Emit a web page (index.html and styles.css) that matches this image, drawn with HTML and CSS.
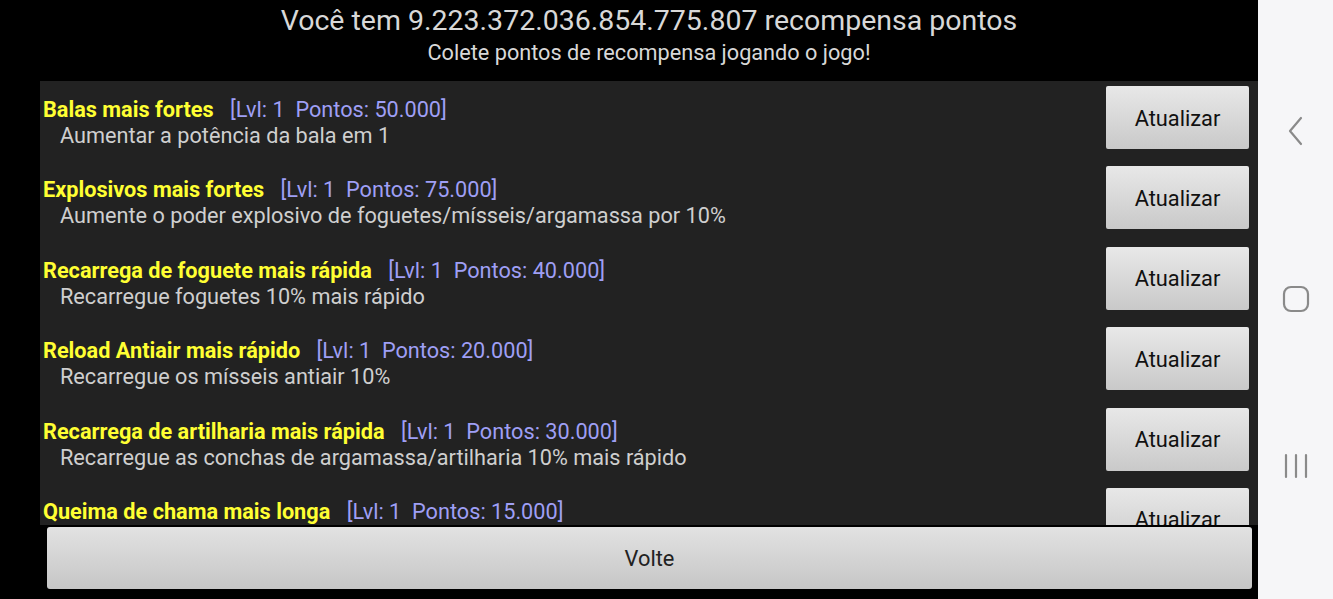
FILE: index.html
```html
<!DOCTYPE html>
<html>
<head>
    <title>Recompensas</title>
    <link rel="stylesheet" href="styles.css">
</head>
<body>
    <div class="screen">
        <div class="main">
            <div class="header">
                <div class="title">Você tem 9.223.372.036.854.775.807 recompensa pontos</div>
                <div class="subtitle">Colete pontos de recompensa jogando o jogo!</div>
            </div>

            <div class="list">
                <div class="row">
                    <div class="info">
                        <div class="name">Balas mais fortes <span class="meta">[Lvl: 1  Pontos: 50.000]</span></div>
                        <div class="desc">Aumentar a potência da bala em 1</div>
                    </div>
                    <button class="upgrade">Atualizar</button>
                </div>
                <div class="row">
                    <div class="info">
                        <div class="name">Explosivos mais fortes <span class="meta">[Lvl: 1  Pontos: 75.000]</span></div>
                        <div class="desc">Aumente o poder explosivo de foguetes/mísseis/argamassa por 10%</div>
                    </div>
                    <button class="upgrade">Atualizar</button>
                </div>
                <div class="row">
                    <div class="info">
                        <div class="name">Recarrega de foguete mais rápida <span class="meta">[Lvl: 1  Pontos: 40.000]</span></div>
                        <div class="desc">Recarregue foguetes 10% mais rápido</div>
                    </div>
                    <button class="upgrade">Atualizar</button>
                </div>
                <div class="row">
                    <div class="info">
                        <div class="name">Reload Antiair mais rápido <span class="meta">[Lvl: 1  Pontos: 20.000]</span></div>
                        <div class="desc">Recarregue os mísseis antiair 10%</div>
                    </div>
                    <button class="upgrade">Atualizar</button>
                </div>
                <div class="row">
                    <div class="info">
                        <div class="name">Recarrega de artilharia mais rápida <span class="meta">[Lvl: 1  Pontos: 30.000]</span></div>
                        <div class="desc">Recarregue as conchas de argamassa/artilharia 10% mais rápido</div>
                    </div>
                    <button class="upgrade">Atualizar</button>
                </div>
                <div class="row">
                    <div class="info">
                        <div class="name">Queima de chama mais longa <span class="meta">[Lvl: 1  Pontos: 15.000]</span></div>
                    </div>
                    <button class="upgrade">Atualizar</button>
                </div>
            </div>

            <div class="footer">
                <button class="back">Volte</button>
            </div>
        </div>

        <div class="navbar">
            <svg class="nav-icon" width="20" height="30" viewBox="0 0 20 30">
                <path d="M15 2 L4 15 L15 28" fill="none" stroke="#8a8a8a" stroke-width="2.2" stroke-linecap="round" stroke-linejoin="round"/>
            </svg>
            <svg class="nav-icon" width="28" height="28" viewBox="0 0 28 28">
                <rect x="2" y="2" width="24" height="24" rx="7" fill="none" stroke="#8a8a8a" stroke-width="2.2"/>
            </svg>
            <svg class="nav-icon" width="28" height="28" viewBox="0 0 28 28">
                <path d="M4 3 V25 M14 3 V25 M24 3 V25" fill="none" stroke="#8a8a8a" stroke-width="2.2" stroke-linecap="round"/>
            </svg>
        </div>
    </div>
</body>
</html>
```

FILE: styles.css
```css
body {
    margin: 0;
    background-color: #000;
    font-family: Roboto, "Liberation Sans", sans-serif;
}
.screen {
    display: flex;
    width: 1333px;
    height: 599px;
    overflow: hidden;
}
.main {
    width: 1258px;
    display: flex;
    flex-direction: column;
    background-color: #000;
}
.header {
    height: 81px;
    margin-left: 40px;
    text-align: center;
    color: #d8d8d8;
}
.title {
    font-size: 28.5px;
    line-height: 32px;
    padding-top: 5px;
}
.subtitle {
    font-size: 21.7px;
    line-height: 26px;
    margin-top: 3px;
}
.list {
    margin-left: 40px;
    height: 444px;
    overflow: hidden;
    background-color: #222;
}
.row {
    display: flex;
    justify-content: space-between;
    height: 80.4px;
    padding-left: 3px;
    padding-right: 9px;
}
.info {
    padding-top: 16px;
}
.name {
    color: #ffff33;
    font-weight: bold;
    font-size: 21.7px;
    line-height: 26px;
}
.meta {
    color: #9f9ff5;
    font-weight: normal;
    white-space: pre;
    margin-left: 11px;
}
.desc {
    color: #cfcfcf;
    font-size: 21.7px;
    line-height: 26px;
    margin-left: 17px;
}
.upgrade {
    margin-top: 5px;
    width: 143px;
    height: 63px;
    padding-top: 2px;
    border: none;
    border-radius: 2px;
    background: linear-gradient(#e8e8e8, #c9c9c9);
    color: #111;
    font-family: Roboto, "Liberation Sans", sans-serif;
    font-size: 21.8px;
}
.footer {
    padding: 2px 6px 0 47px;
}
.back {
    width: 100%;
    height: 62px;
    border: none;
    border-radius: 3px;
    background: linear-gradient(#e2e2e2, #c6c6c6);
    color: #222;
    font-family: Roboto, "Liberation Sans", sans-serif;
    font-size: 21.8px;
}
.navbar {
    width: 75px;
    background-color: #f6f6f8;
    display: flex;
    flex-direction: column;
    align-items: center;
    padding-top: 116px;
    gap: 139px;
}
```
